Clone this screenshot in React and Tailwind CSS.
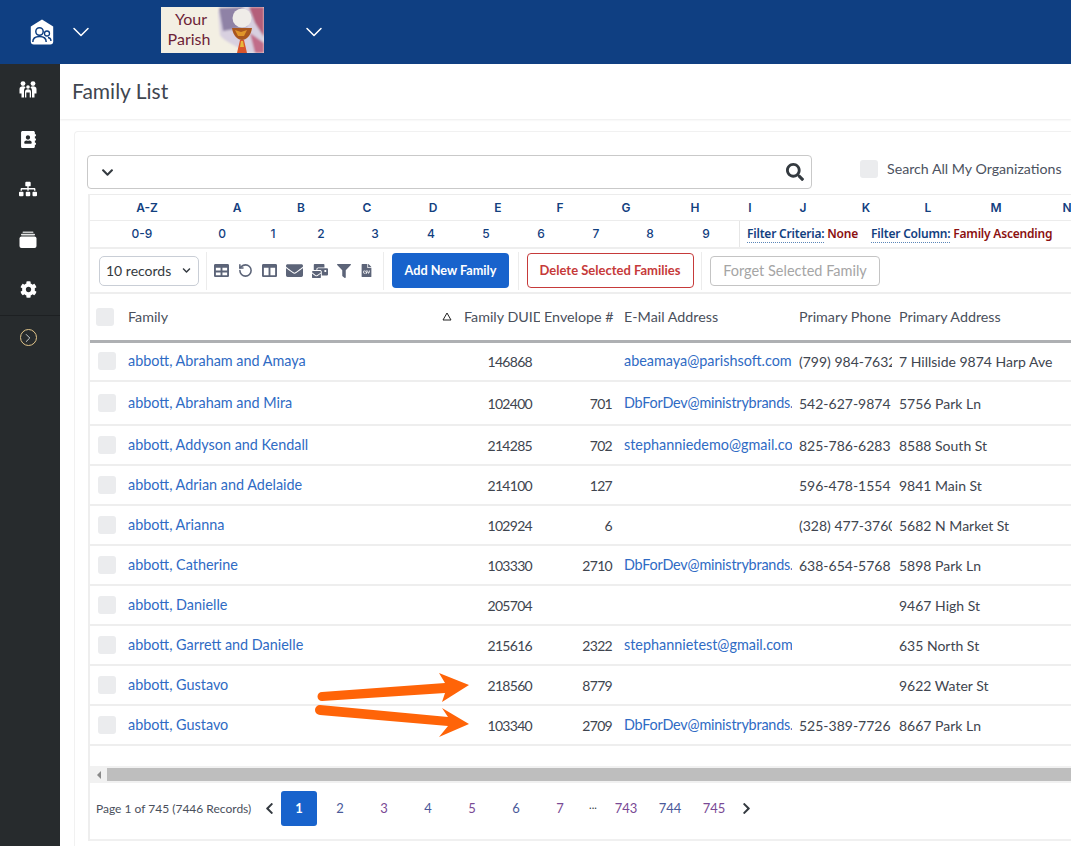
import { FaAddressBook, FaSitemap, FaCog, FaColumns, FaEnvelope, FaFilter, FaFileCsv, FaSearch, FaChevronDown, FaChevronLeft, FaChevronRight, FaMailBulk, FaTable } from "react-icons/fa";
import { RotateCcw, ChevronDown, ChevronRight } from "lucide-react";

const letters = [
  ["A-Z", 114], ["A", 66], ["B", 62], ["C", 70], ["D", 62], ["E", 68], ["F", 56], ["G", 76],
  ["H", 62], ["I", 48], ["J", 58], ["K", 68], ["L", 56], ["M", 80], ["N", 62],
];

const digits = [
  ["0-9", 104], ["0", 56], ["1", 46], ["2", 50], ["3", 58], ["4", 54], ["5", 56], ["6", 54], ["7", 56], ["8", 52], ["9", 60],
];

const families = [
  { name: "abbott, Abraham and Amaya", duid: "146868", env: "", email: "abeamaya@parishsoft.com", phone: "(799) 984-7632", addr: "7 Hillside 9874 Harp Ave", h: "h-[40px]" },
  { name: "abbott, Abraham and Mira", duid: "102400", env: "701", email: "DbForDev@ministrybrands.", phone: "542-627-9874", addr: "5756 Park Ln", h: "h-[44px]" },
  { name: "abbott, Addyson and Kendall", duid: "214285", env: "702", email: "stephanniedemo@gmail.com", phone: "825-786-6283", addr: "8588 South St", h: "h-[40px]" },
  { name: "abbott, Adrian and Adelaide", duid: "214100", env: "127", email: "", phone: "596-478-1554", addr: "9841 Main St", h: "h-[40px]" },
  { name: "abbott, Arianna", duid: "102924", env: "6", email: "", phone: "(328) 477-3760", addr: "5682 N Market St", h: "h-[40px]" },
  { name: "abbott, Catherine", duid: "103330", env: "2710", email: "DbForDev@ministrybrands.", phone: "638-654-5768", addr: "5898 Park Ln", h: "h-[40px]" },
  { name: "abbott, Danielle", duid: "205704", env: "", email: "", phone: "", addr: "9467 High St", h: "h-[40px]" },
  { name: "abbott, Garrett and Danielle", duid: "215616", env: "2322", email: "stephannietest@gmail.com", phone: "", addr: "635 North St", h: "h-[40px]" },
  { name: "abbott, Gustavo", duid: "218560", env: "8779", email: "", phone: "", addr: "9622 Water St", h: "h-[40px]" },
  { name: "abbott, Gustavo", duid: "103340", env: "2709", email: "DbForDev@ministrybrands.", phone: "525-389-7726", addr: "8667 Park Ln", h: "h-[40px]" },
];

const pages = [
  ["2", "ml-[1px] text-[#4a5a9a]"],
  ["3", "text-[#7a4a95]"],
  ["4", "text-[#4a5a9a]"],
  ["5", "text-[#7a4a95]"],
  ["6", "text-[#4a5a9a]"],
  ["7", "text-[#7a4a95]"],
];

const FamilyIcon = () => (
  <svg width="18" height="17" viewBox="0 0 18 17" fill="white">
    <circle cx="4" cy="2.600" r="2.400" />
    <circle cx="14" cy="2.600" r="2.400" />
    <circle cx="9" cy="6" r="1.800" />
    <path d="M0.500 8c0-1.800 1.400-2.700 3.500-2.700 1.200 0 2 .3 2.600.9C5.600 7 5 8.200 5 10v6.500H2.500V12.500H0.500z" />
    <path d="M17.500 8c0-1.800-1.400-2.700-3.500-2.700-1.200 0-2 .3-2.600.9 1 .8 1.600 2 1.600 3.800v6.500h2.500V12.500h2z" />
    <path d="M6 11c0-1.800 1.200-2.700 3-2.700s3 .9 3 2.700v5.500h-1.300v-5H7.300v5H6z" />
  </svg>
);

const StackIcon = () => (
  <svg width="18" height="17" viewBox="0 0 18 17" fill="white">
    <rect x="3.500" y="0.500" width="11" height="1.500" rx="0.700" fill="#c9cbcc" />
    <rect x="2" y="2.800" width="14" height="1.800" rx="0.800" fill="#e6e7e7" />
    <rect x="0.500" y="5.400" width="17" height="11.600" rx="2" />
  </svg>
);

const HomeIcon = () => (
  <svg width="24" height="26" viewBox="0 0 24 26">
    <path d="M12 0.500L23.200 7.500V22.500a3 3 0 0 1-3 3H3.800a3 3 0 0 1-3-3V7.500z" fill="white" />
    <circle cx="9.500" cy="12.500" r="3.700" fill="none" stroke="#0f3f82" strokeWidth="1.500" />
    <path d="M2.800 23c0-4 2.500-5.600 6.700-5.600s6.700 1.600 6.700 5.600" fill="none" stroke="#0f3f82" strokeWidth="1.500" />
    <circle cx="17" cy="14.500" r="2.500" fill="none" stroke="#0f3f82" strokeWidth="1.300" />
    <path d="M18 18.500c2 .3 3 1.500 3 3.500" fill="none" stroke="#0f3f82" strokeWidth="1.300" />
  </svg>
);

const ParishLogo = () => (
  <div className="flex h-[46px] w-[103px] overflow-hidden bg-[#f3efe3]">
    <div className="flex w-[56px] shrink-0 flex-col items-center justify-center pb-[2px] text-[16px] leading-[20px] text-[#6d1f38]">
      <span className="ml-[4px]">Your</span>
      <span>Parish</span>
    </div>
    <svg width="47" height="46" viewBox="0 0 47 46" className="shrink-0">
      <defs>
        <filter id="soft"><feGaussianBlur stdDeviation="1.200" /></filter>
      </defs>
      <g filter="url(#soft)">
        <path d="M1 4L30 0H47V46H30C20 38 8 36 3 28z" fill="#d8d0e0" />
        <path d="M2 1L26 0L30 20L6 24z" fill="#8f82a6" />
        <path d="M32 0H47V30L38 16z" fill="#a83a58" opacity="0.750" />
        <path d="M33 26L47 36V46H38z" fill="#b5385a" opacity="0.650" />
      </g>
      <circle cx="25" cy="11" r="9.500" fill="#efece8" />
      <path d="M15 21H35C34 29 29 33 25 33S16 29 15 21z" fill="#a9561f" />
      <path d="M18 23L24 25L30 23L27 29H21z" fill="#e0952a" />
      <path d="M23 33H27L30 46H20z" fill="#d9552b" />
      <path d="M24 34L26 34L27 40H23z" fill="#e8b73a" />
    </svg>
  </div>
);

const Check = ({ className = "" }) => <div className={`h-[18px] w-[18px] rounded-[3px] bg-[#ebecee] ${className}`} />;

const Clip = ({ children, className = "" }) => (
  <div className={`overflow-hidden whitespace-nowrap ${className}`}>{children}</div>
);

const Arrow = () => (
  <svg className="absolute left-[312px] top-[670px]" width="162" height="70" viewBox="0 0 162 70" fill="#ff6408">
    <path d="M10 22L133 13L127 3L157 15L130 32L133 23L10 31a4.500 4.500 0 0 1 0-9z" />
    <path d="M8 35L136 47L130 38L157 54L127 67L136 56L8 45a5 5 0 0 1 0-10z" />
  </svg>
);

export default function App() {
  return (
    <div className="relative h-[846px] w-full overflow-hidden bg-white text-[14px] text-[#40454f] [font-family:'Lato',sans-serif]">
      <header className="flex h-16 items-center bg-[#0f3f82]">
        <div className="ml-[30px] mt-[-1px]"><HomeIcon /></div>
        <ChevronDown className="ml-[13px] text-white" size={28} strokeWidth={1.300} />
        <div className="ml-[66px] mt-[-4px]"><ParishLogo /></div>
        <ChevronDown className="ml-[36px] text-white" size={28} strokeWidth={1.300} />
      </header>

      <div className="flex h-[782px]">
        <aside className="flex w-[60px] shrink-0 flex-col items-center bg-[#272b2d] text-white">
          <div className="flex h-[252px] w-full flex-col items-center border-b border-[#1d2022] pr-[4px]">
            <div className="flex h-[50px] shrink-0 items-center"><FamilyIcon /></div>
            <div className="flex h-[50px] shrink-0 items-center"><FaAddressBook size={17} /></div>
            <div className="flex h-[50px] shrink-0 items-center"><FaSitemap size={18} /></div>
            <div className="flex h-[50px] shrink-0 items-center"><StackIcon /></div>
            <div className="flex h-[50px] shrink-0 items-center"><FaCog size={17} /></div>
          </div>
          <div className="mr-[4px] mt-[13px] flex h-[17px] w-[17px] items-center justify-center rounded-full border border-[#e2c58a]">
            <ChevronRight size={14} strokeWidth={1.500} className="text-[#dfe3e6]" />
          </div>
        </aside>

        <main className="min-w-0 flex-1 overflow-hidden bg-white">
          <div className="flex h-[55px] items-center pb-[2px] pl-3 text-[21px] text-[#3f4650] shadow-[0_1px_2px_rgba(0,0,0,0.08)]">
            Family List
          </div>

          <div className="ml-[14px] mt-3 h-[760px] rounded-tl border-l border-t border-[#f1f1f1] pl-[12px] pt-[23px]">
            <div className="flex items-center">
              <div className="flex h-[34px] w-[725px] shrink-0 items-center justify-between rounded-[4px] border border-[#c9c9c9] pl-[13px] pr-[7px] text-[#343a40]">
                <FaChevronDown size={13} />
                <FaSearch size={18} />
              </div>
              <Check className="ml-[48px] mt-[-6px]" />
              <span className="ml-[9px] mt-[-6px] whitespace-nowrap text-[14.200px] text-[#4c5260]">Search All My Organizations</span>
            </div>

            <div className="ml-[1px] mt-[5px] w-[1040px] border-l-2 border-[#eeeeee]">
              <div className="flex h-[27px] items-center border-y border-[#ececec] text-[12px] font-semibold text-[#12407f] [font-family:'Inter',sans-serif]">
                {letters.map(([l, w]) => (
                  <span key={l} className="shrink-0 text-center" style={{ width: w }}>{l}</span>
                ))}
              </div>
              <div className="flex h-[28px] items-center border-b-2 border-[#eeeeee] text-[12px] font-medium text-[#12407f] [font-family:'Inter',sans-serif]">
                {digits.map(([d, w]) => (
                  <span key={d} className="shrink-0 text-center" style={{ width: w }}>{d}</span>
                ))}
                <div className="ml-[3px] flex h-full items-center gap-[13px] whitespace-nowrap border-l border-[#e6e6e6] pl-[7px] text-[12px] font-semibold tracking-[-0.200px] [font-family:'Noto_Sans',sans-serif]">
                  <span><span className="border-b border-dotted border-[#5b86b8]">Filter Criteria:</span> <span className="text-[#8b1010]">None</span></span>
                  <span><span className="border-b border-dotted border-[#5b86b8]">Filter Column:</span> <span className="text-[#8b1010]">Family Ascending</span></span>
                </div>
              </div>

              <div className="flex h-[45px] items-center border-b-2 border-[#eeeeee] pl-[9px]">
                <div className="flex h-[30px] w-[100px] shrink-0 items-center justify-between rounded-[5px] border border-[#c9ced6] pl-[6px] pr-[7px] text-[14px] text-[#343a40]">
                  10 records
                  <FaChevronDown size={9} />
                </div>
                <div className="ml-[7px] flex h-[38px] w-[178px] shrink-0 items-center gap-[9px] border-x border-[#ececec] pl-[7px] text-[#5c6478]">
                  <FaTable size={15} />
                  <RotateCcw size={15} strokeWidth={2.500} />
                  <FaColumns size={15} />
                  <FaEnvelope size={17} />
                  <FaMailBulk size={16} />
                  <FaFilter size={14} />
                  <FaFileCsv size={13} />
                </div>
                <button className="ml-[8px] h-[35px] w-[117px] shrink-0 rounded-[4px] bg-[#1863cc] text-[12.700px] font-bold text-white">Add New Family</button>
                <div className="ml-[9px] flex h-[38px] w-[184px] shrink-0 items-center justify-center border-x border-[#ececec]">
                  <button className="h-[35px] w-[167px] whitespace-nowrap rounded-[4px] border border-[#c63a3a] text-[13px] font-bold text-[#c63a3a]">Delete Selected Families</button>
                </div>
                <button className="ml-[8px] h-[30px] w-[170px] shrink-0 whitespace-nowrap rounded-[4px] border border-[#c4c4c4] text-[14.500px] text-[#a5a5a5]">Forget Selected Family</button>
              </div>

              <table className="w-[1100px] table-fixed border-collapse">
                <colgroup>
                  <col className="w-[30px]" />
                  <col className="w-[336px]" />
                  <col className="w-[84px]" />
                  <col className="w-[76px]" />
                  <col className="w-[176px]" />
                  <col className="w-[100px]" />
                  <col className="w-[298px]" />
                </colgroup>
                <thead>
                  <tr className="h-[47px] border-b-[3px] border-[#aeb0b3] text-left text-[14.300px] text-[#4a505c]">
                    <th className="pl-[6px] font-normal"><Check /></th>
                    <th className="pl-2 font-normal">
                      <div className="flex items-center justify-between pr-[4px]">
                        Family
                        <svg width="10" height="9" viewBox="0 0 10 9" fill="none" stroke="#222" strokeWidth="1"><path d="M5 1L9 8H1z" /></svg>
                      </div>
                    </th>
                    <th className="pl-2 font-normal"><Clip>Family DUID</Clip></th>
                    <th className="pl-1 font-normal"><Clip>Envelope #</Clip></th>
                    <th className="pl-2 font-normal"><Clip>E-Mail Address</Clip></th>
                    <th className="pl-[7px] font-normal"><Clip>Primary Phone</Clip></th>
                    <th className="pl-[7px] font-normal"><Clip>Primary Address</Clip></th>
                  </tr>
                </thead>
                <tbody>
                  {families.map((f, i) => (
                    <tr key={i} className={`${f.h} border-b-2 border-[#eeeeee]`}>
                      <td className="pl-[8px]"><Check /></td>
                      <td className="pl-2 text-[14.400px] text-[#2f6bc4]">{f.name}</td>
                      <td className="pr-2 text-right tracking-[-0.700px]">{f.duid}</td>
                      <td className="pr-1 text-right tracking-[-0.700px]">{f.env}</td>
                      <td className="pl-2 text-[14.400px] text-[#2f6bc4]">
                        <Clip className={f.email.startsWith("Db") ? "tracking-[-0.200px]" : ""}>{f.email}</Clip>
                      </td>
                      <td className="pl-[7px]"><Clip>{f.phone}</Clip></td>
                      <td className="pl-[7px]"><Clip>{f.addr}</Clip></td>
                    </tr>
                  ))}
                </tbody>
              </table>

              <div className="mt-[20px] flex h-[17px] items-center border-y-2 border-[#f1f1f1] bg-[#f1f1f1]">
                <div className="flex w-[17px] shrink-0 items-center justify-center">
                  <div className="h-0 w-0 border-y-[4px] border-r-[4px] border-y-transparent border-r-[#8a8a8a]" />
                </div>
                <div className="h-[13px] flex-1 bg-[#bebebe]" />
              </div>

              <div className="flex h-[58px] items-start border-b-2 border-[#f0f0f0] pl-[6px] pt-[8px]">
                <div className="flex h-[35px] items-center">
                  <span className="w-[157px] shrink-0 whitespace-nowrap text-[12px] text-[#4a505c]">Page 1 of 745 (7446 Records)</span>
                  <FaChevronLeft size={13} className="ml-[10px] text-[#343a40]" />
                  <span className="ml-[5px] flex h-[35px] w-[36px] items-center justify-center rounded-[3px] bg-[#1863cc] text-[13px] font-bold text-white">1</span>
                  {pages.map(([p, c]) => (
                    <span key={p} className={`${c} w-[44px] shrink-0 text-center text-[13px]`}>{p}</span>
                  ))}
                  <span className="mt-[-8px] w-[22px] shrink-0 text-center text-[11px] leading-[8px] text-[#343a40]">...</span>
                  {["743", "744", "745"].map((p, i) => (
                    <span key={p} className={`w-[44px] shrink-0 text-center text-[13px] ${i === 1 ? "text-[#4a5a9a]" : "text-[#7a4a95]"}`}>{p}</span>
                  ))}
                  <FaChevronRight size={13} className="ml-[4px] text-[#343a40]" />
                </div>
              </div>
            </div>
          </div>
        </main>
      </div>
      <Arrow />
    </div>
  );
}
